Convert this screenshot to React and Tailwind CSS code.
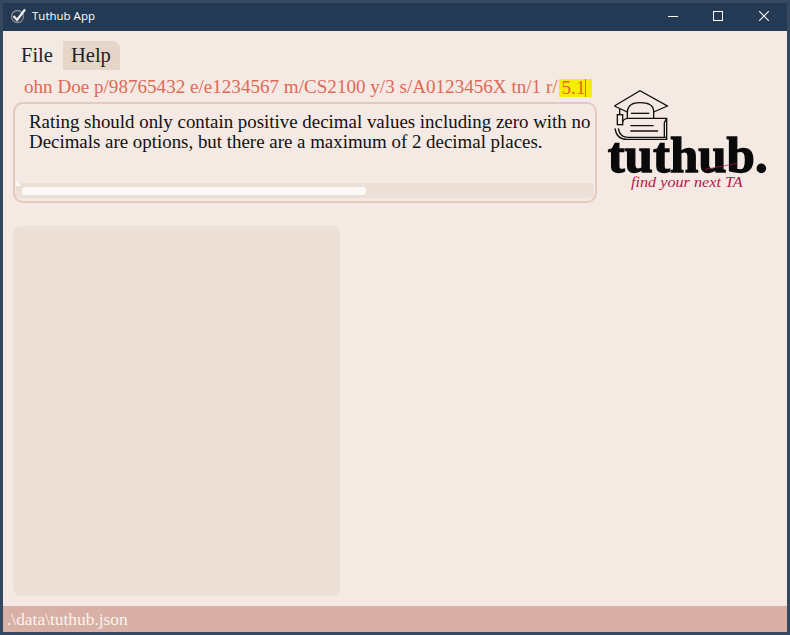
const SERIF = "font-['Liberation_Serif',Georgia,serif]";

function WindowButtons() {
  return (
    <div className="ml-auto flex items-center pb-[2px]">
      <svg width="10" height="10" viewBox="0 0 10 10" className="mr-[35px]">
        <path d="M0 5.5 H10" stroke="#fff" strokeWidth="1" />
      </svg>
      <svg width="10" height="10" viewBox="0 0 10 10" className="mr-[36px]">
        <rect x="0.5" y="0.5" width="9" height="9" fill="none" stroke="#fff" strokeWidth="1" />
      </svg>
      <svg width="10" height="10" viewBox="0 0 10 10" className="mr-[18px]">
        <path d="M0 0 L10 10 M10 0 L0 10" stroke="#fff" strokeWidth="1.1" />
      </svg>
    </div>
  );
}

function TitleBar() {
  return (
    <div className="flex h-[28px] items-center bg-[#243953] text-white">
      <svg width="18" height="18" viewBox="0 0 18 18" className="mb-[2px] ml-[7px]">
        <circle cx="7.5" cy="9.5" r="6" fill="none" stroke="#8d8a88" strokeWidth="1.3" />
        <path d="M3.5 9 L7 13 L15 2.5" fill="none" stroke="#f4f4f4" strokeWidth="2.2" />
      </svg>
      <span className="mb-[2px] ml-[4px] font-['Open_Sans',sans-serif] text-[11.5px]">Tuthub App</span>
      <WindowButtons />
    </div>
  );
}

function MenuBar() {
  return (
    <div className={`flex pl-[9px] pt-[10px] text-[20.5px] leading-[29px] text-[#222] ${SERIF}`}>
      <div className="h-[29px] w-[51px] pl-[9px]">File</div>
      <div className="h-[29px] w-[57px] rounded-tr-[8px] bg-[#e6d6ca] pl-[8px]">Help</div>
    </div>
  );
}

function Logo() {
  return (
    <svg width="185" height="125" viewBox="0 0 555 375" className="ml-[-2px] mt-[10px] shrink-0">
      <g fill="none" stroke="#111" strokeWidth="4">
        <path d="M58 78 L135 32 L217 78 L176 96 M97 96 L58 78" />
        <path d="M97 115 V95 Q99 68 135 68 Q176 68 176 95 V115" />
        <path d="M108 100 H163" />
        <path d="M74 86 V104" />
        <rect x="67" y="104" width="16" height="30" />
        <path d="M84 125 Q84 116 100 115 H215 V178 H95 Q65 178 60 145" />
        <path d="M70 145 Q74 172 100 172 H215" />
        <path d="M215 115 L208 128 V172" />
        <path d="M106 137 H176 M106 153 H189" />
      </g>
      <text
        x="38"
        y="275"
        fill="#0a0a0a"
        stroke="#0a0a0a"
        strokeWidth="4"
        fontFamily="'Liberation Serif', serif"
        fontWeight="700"
        fontSize="155"
        textLength="480"
        lengthAdjust="spacingAndGlyphs"
      >
        tuthub.
      </text>
      <text
        x="108"
        y="322"
        fill="#b5174a"
        fontFamily="'Liberation Serif', serif"
        fontStyle="italic"
        fontSize="44"
        textLength="335"
        lengthAdjust="spacingAndGlyphs"
      >
        find your next TA
      </text>
      <path d="M330 268 L428 250" stroke="#b5174a" strokeWidth="2" fill="none" />
    </svg>
  );
}

export default function App() {
  return (
    <div className="flex h-[635px] w-[790px] flex-col overflow-hidden bg-[#34495f] p-[3px]">
      <TitleBar />
      <div className={`flex min-h-0 flex-1 flex-col bg-[#f4e9e3] ${SERIF}`}>
        <MenuBar />
        <div className="flex">
          <div className="w-[594px] shrink-0 pl-[10px]">
            <div className="mt-[3px] flex h-[29px] items-center overflow-hidden whitespace-nowrap pl-[11px] text-[19.1px] text-[#de6a57]">
              <span>ohn Doe p/98765432 e/e1234567 m/CS2100 y/3 s/A0123456X tn/1 r/</span>
              <span className="ml-[1px] mt-[1px] flex h-[18px] w-[33px] shrink-0 items-center bg-[#f5ee00] pl-[3px] text-[#df6a1e]">
                <span className="border-r border-[#b8860b] leading-[18px]">5.1</span>
              </span>
            </div>
            <div className="relative flex h-[101px] w-[584px] flex-col overflow-hidden rounded-[10px] border-2 border-[#e2cbbc]">
              <div className="flex-1 whitespace-nowrap pl-[14px] pt-[8px] text-[18.9px] leading-[20px] text-[#111]">
                <p>Rating should only contain positive decimal values including zero with no</p>
                <p>Decimals are options, but there are a maximum of 2 decimal places.</p>
              </div>
              <div className="absolute bottom-[15px] left-[1px] h-[6px] w-[5px] bg-[#fbf9f6] [clip-path:polygon(0_0,100%_100%,0_100%)]" />
              <div className="mx-[1px] mb-[3px] flex h-[15px] items-center rounded-[4px] bg-[#ecdfd5] px-[6px]">
                <div className="h-[8px] w-[344px] rounded-[3px] bg-[#fbf9f6]" />
              </div>
            </div>
          </div>
          <Logo />
        </div>
        <div className="ml-[10px] mt-[21px] h-[370px] w-[327px] rounded-[8px] bg-[#ecdfd6]" />
        <div className="mt-auto flex h-[26px] items-center bg-[#d8b0a5] pl-[4px] text-[17.4px] text-[#fbf3ee]">
          .\data\tuthub.json
        </div>
      </div>
    </div>
  );
}
